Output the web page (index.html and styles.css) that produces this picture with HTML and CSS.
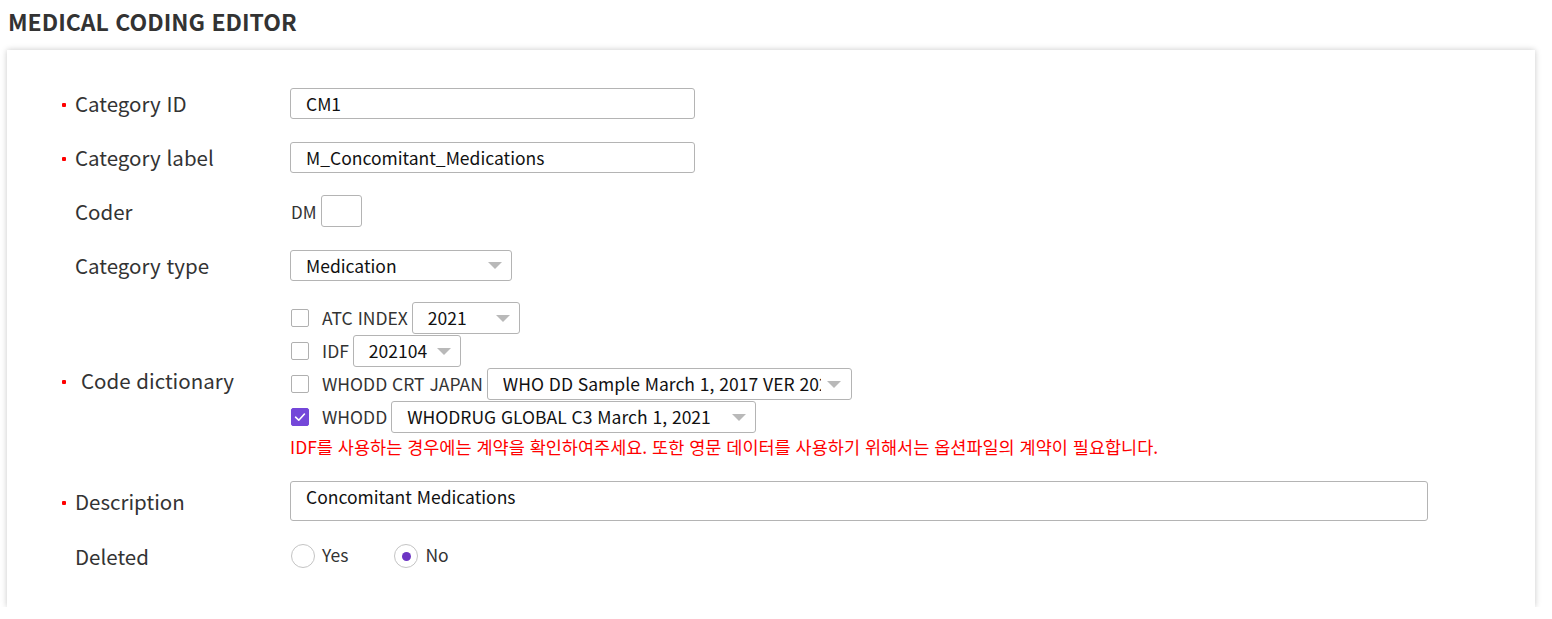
FILE: index.html
```html
<!DOCTYPE html>
<html lang="ko">
<head>
<meta charset="utf-8">
<title>Medical Coding Editor</title>
<link rel="stylesheet" href="styles.css">
</head>
<body>
<h1 class="page-title">MEDICAL CODING EDITOR</h1>
<div class="card">
  <div class="row">
    <div class="label required">Category ID</div>
    <div class="value"><div class="input w-405">CM1</div></div>
  </div>
  <div class="row">
    <div class="label required">Category label</div>
    <div class="value"><div class="input w-405">M_Concomitant_Medications</div></div>
  </div>
  <div class="row">
    <div class="label">Coder</div>
    <div class="value"><span class="prefix">DM</span><div class="input small-box"></div></div>
  </div>
  <div class="row">
    <div class="label">Category type</div>
    <div class="value"><div class="select w-222">Medication<span class="arrow"></span></div></div>
  </div>
  <div class="row dict-row">
    <div class="label required indent">Code dictionary</div>
    <div class="value dict">
      <div class="dict-line"><span class="checkbox"></span><span class="dict-name">ATC INDEX</span><div class="select s-atc">2021<span class="arrow"></span></div></div>
      <div class="dict-line"><span class="checkbox"></span><span class="dict-name">IDF</span><div class="select s-idf">202104<span class="arrow"></span></div></div>
      <div class="dict-line"><span class="checkbox"></span><span class="dict-name">WHODD CRT JAPAN</span><div class="select s-wide clip"><span class="clip-text">WHO DD Sample March 1, 2017 VER 2021</span><span class="arrow"></span></div></div>
      <div class="dict-line"><span class="checkbox checked"><svg viewBox="0 0 18 18" width="18" height="18"><path d="M4 9.2 L7.6 12.6 L14 5.6" fill="none" stroke="#fff" stroke-width="1.8" stroke-linecap="round" stroke-linejoin="round"/></svg></span><span class="dict-name">WHODD</span><div class="select s-wide">WHODRUG GLOBAL C3 March 1, 2021<span class="arrow"></span></div></div>
      <div class="notice">IDF를 사용하는 경우에는 계약을 확인하여주세요. 또한 영문 데이터를 사용하기 위해서는 옵션파일의 계약이 필요합니다.</div>
    </div>
  </div>
  <div class="row">
    <div class="label required">Description</div>
    <div class="value"><div class="textarea">Concomitant Medications</div></div>
  </div>
  <div class="row last-row">
    <div class="label">Deleted</div>
    <div class="value radios">
      <span class="radio"></span><span class="radio-label">Yes</span>
      <span class="radio checked"></span><span class="radio-label">No</span>
    </div>
  </div>
</div>
</body>
</html>
```
FILE: styles.css
```css
* { box-sizing: border-box; }
body {
  margin: 0;
  padding: 0 8px;
  background: #fff;
  font-family: "Noto Sans CJK KR", "Noto Sans", sans-serif;
  color: #333;
}
.page-title {
  margin: 0;
  padding-top: 7px;
  height: 50px;
  font-size: 23px;
  font-weight: 700;
  color: #333;
  line-height: 28px;
}
.card {
  margin-left: -1px;
  width: 1528px;
  background: #fff;
  box-shadow: 0 0 6px rgba(0,0,0,0.22);
  padding: 26px 0 24px 55px;
}
.row {
  display: flex;
  align-items: center;
  min-height: 54px;
}
.last-row { padding-top: 1px; min-height: 55px; }
.label {
  width: 228px;
  flex: none;
  font-size: 20.5px;
  color: #333;
  padding-left: 13px;
  position: relative;
  line-height: 26px;
}
.label.required::before {
  content: "";
  position: absolute;
  left: 0;
  top: 13px;
  width: 4px;
  height: 4px;
  border-radius: 1px;
  background: #f00;
}
.label.indent { padding-left: 19px; }
.value {
  display: flex;
  align-items: center;
  font-size: 17.5px;
  color: #222;
}
.input, .select, .textarea {
  height: 31px;
  border: 1px solid #b4b4b4;
  border-radius: 3px;
  padding: 0 15px;
  display: flex;
  align-items: center;
  font-size: 17.5px;
  color: #111;
  background: #fff;
  white-space: nowrap;
}
.w-405 { width: 405px; }
.prefix { font-size: 17px; color: #333; margin-right: 4px; margin-left: 1px; }
.small-box { width: 41px; height: 32px; padding: 0; }
.select { position: relative; }
.w-222 { width: 222px; }
.arrow {
  position: absolute;
  right: 9px;
  top: 50%;
  margin-top: -3px;
  width: 0;
  height: 0;
  border-left: 7px solid transparent;
  border-right: 7px solid transparent;
  border-top: 7px solid #b9b9b9;
}
.dict-row { padding: 9px 0 15px; }
.dict { flex-direction: column; align-items: flex-start; }
.dict-line {
  display: flex;
  align-items: center;
  height: 33px;
}
.checkbox {
  width: 18px;
  height: 18px;
  border: 1px solid #b0b0b0;
  border-radius: 2px;
  margin-left: 1px;
  margin-right: 13px;
  display: inline-flex;
  align-items: center;
  justify-content: center;
  background: #fff;
  flex: none;
}
.checkbox.checked { background: #7447d9; border-color: #7447d9; }
.checkbox svg { display: block; }
.dict-name { font-size: 17.5px; color: #333; margin-right: 4px; }
.select.s-atc, .select.s-idf, .select.s-wide { height: 32px; }
.s-atc { width: 108px; }
.s-idf { width: 108px; }
.s-wide { width: 365px; }
.clip { padding-right: 30px; }
.clip-text { overflow: hidden; display: block; }
.clip .arrow { right: 10px; }
.notice {
  color: #f00;
  font-size: 17.5px;
  margin-top: 1px;
  line-height: 25px;
  white-space: nowrap;
}
.textarea {
  width: 1138px;
  height: 40px;
  align-items: flex-start;
  padding-top: 2px;
}
.radio {
  width: 24px;
  height: 24px;
  border-radius: 50%;
  border: 1px solid #c4c4c4;
  display: inline-flex;
  align-items: center;
  justify-content: center;
  margin-left: 1px;
  margin-right: 7px;
  background: #fff;
}
.radio.checked::after {
  content: "";
  width: 9px;
  height: 9px;
  border-radius: 50%;
  background: #6d35c4;
}
.radio-label { font-size: 17.5px; color: #333; margin-right: 45px; position: relative; top: -2px; }
```
